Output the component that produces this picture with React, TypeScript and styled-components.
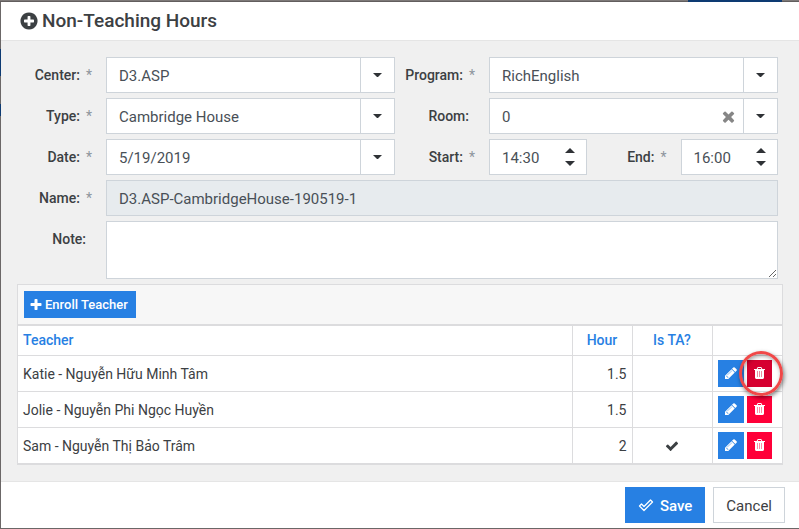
import React, { useId, useState } from "react";
import styled, { createGlobalStyle, css } from "styled-components";

const GlobalStyle = createGlobalStyle`
  *, *::before, *::after { box-sizing: border-box; }
  html, body, #root { height: 100%; }
  body {
    margin: 0;
    background: #6b6767;
    color: #3c4043;
    font-family: Roboto, "Liberation Sans", sans-serif;
    font-size: 14px;
    line-height: 20px;
  }
  button, input, select, textarea { font: inherit; color: inherit; border-radius: 0; margin: 0; }
`;

const Backdrop = styled.div`
  min-height: 100%;
  display: flex;
  padding: 2px 0 1px 1px;
  background:
    linear-gradient(#0d3a72, #0d3a72) calc(100% - 17px) 0 / 94px 2px no-repeat,
    linear-gradient(#0d3a72, #0d3a72) 0 49px / 1px 27px no-repeat,
    linear-gradient(#0d3a72, #0d3a72) 0 104px / 1px 12px no-repeat,
    linear-gradient(#7d7978 1px, #625e5e 1px) 0 0 / 100% 2px no-repeat,
    #6b6767;
`;

const Dialog = styled.section`
  flex: 1;
  min-width: 0;
  display: flex;
  flex-direction: column;
  background: #fff;
`;

const Header = styled.header`
  display: flex;
  align-items: center;
  gap: 3px;
  height: 39px;
  padding: 0 18px;
  border-bottom: 1px solid #e5e5e5;
`;

const Title = styled.h1`
  margin: 0;
  font-size: 19px;
  line-height: 24px;
  font-weight: 500;
`;

const Body = styled.div`
  flex: 1;
  padding: 16px;
  background: #f0f0f0;
`;

const Form = styled.div`
  display: grid;
  grid-template-columns: 89px 1fr 94px 1fr;
  row-gap: 5px;
  padding-right: 5px;
`;

const FieldLabel = styled.label<{ $required?: boolean }>`
  height: 36px;
  display: flex;
  justify-content: flex-end;
  gap: 6px;
  padding: 8px ${(p) => (p.$required ? 14 : 20)}px 0 0;
  font-weight: 500;
  white-space: nowrap;
`;

const Star = styled.span`
  color: #8d959d;
  font-weight: 400;
`;

const Control = styled.div<{ $wide?: boolean }>`
  display: flex;
  min-width: 0;
  border: 1px solid #ced4da;
  background: #fff;
  color: #495057;
  font-size: 15px;
  ${(p) => p.$wide && css`grid-column: span 3;`}
`;

const fieldText = css`
  flex: 1;
  min-width: 0;
  height: 34px;
  padding: 2px 12px 0;
  border: 0;
  background: transparent;
  outline: 0;
`;

const TextInput = styled.input`
  ${fieldText}
  &[readonly] { background: #e7ebee; }
`;

const Picker = styled.select`
  ${fieldText}
  appearance: none;
`;

const NoteArea = styled.textarea`
  display: block;
  width: 100%;
  height: 56px;
  padding: 8px 12px;
  border: 0;
  outline: 0;
  resize: vertical;
`;

const DropButton = styled.button`
  width: 34px;
  display: flex;
  align-items: center;
  justify-content: center;
  padding: 0;
  border: 0;
  border-left: 1px solid #ced4da;
  background: #fff;
`;

const ClearButton = styled.button`
  width: 30px;
  display: flex;
  align-items: center;
  justify-content: center;
  padding: 0;
  border: 0;
  background: none;
  color: #868686;
`;

const Spinner = styled.div`
  width: 32px;
  display: flex;
  flex-direction: column;
  justify-content: center;
  gap: 2px;
`;

const SpinButton = styled.button`
  height: 11px;
  display: flex;
  align-items: center;
  justify-content: center;
  padding: 0;
  border: 0;
  background: none;
`;

const TimeRange = styled.div`
  display: grid;
  grid-template-columns: 1fr 94px 1fr;
`;

const Panel = styled.div`
  margin-top: 5px;
  border: 1px solid #dcdcde;
  border-bottom-width: 2px;
  background: #fff;
`;

const Toolbar = styled.div`
  padding: 6px;
  height: 41px;
  border-bottom: 2px solid #dcdcde;
  background: #f7f7f7;
`;

const EnrollButton = styled.button`
  height: 27px;
  display: flex;
  align-items: center;
  gap: 2px;
  padding: 0 8px 0 5px;
  border: 0;
  background: #2780e3;
  color: #fff;
  font-size: 13px;
  font-weight: 500;
`;

const Table = styled.table`
  width: 100%;
  border-collapse: collapse;
  table-layout: fixed;
`;

const Col = styled.col<{ $width?: number }>`
  ${(p) => p.$width && css`width: ${p.$width}px;`}
`;

const cell = css<{ $align?: "left" | "center" | "right" }>`
  text-align: ${(p) => p.$align ?? "left"};
  padding: 0 5px;
  border: 0 solid #dcdcde;
  &:not(:first-child) { border-left-width: 1px; }
`;

const HeadCell = styled.th`
  ${cell}
  height: 29px;
  color: #2780e3;
  font-weight: 500;
`;

const Cell = styled.td<{ $flush?: boolean }>`
  ${cell}
  height: 36px;
  padding-top: ${(p) => (p.$flush ? 0 : 2)}px;
  border-top-width: 1px;
  > svg { display: block; margin: 0 auto; }
`;

const Actions = styled.div`
  display: flex;
  gap: 3px;
`;

const ActionButton = styled.button<{ $tone: "edit" | "delete" | "active" }>`
  width: ${(p) => (p.$tone === "edit" ? 26 : 25)}px;
  height: 27px;
  display: flex;
  align-items: center;
  justify-content: center;
  padding: 0 0 1px;
  border: 0;
  color: #fff;
  background: ${(p) => ({ edit: "#2780e3", delete: "#ff0039", active: "#d60030" })[p.$tone]};
`;

const Marked = styled.span`
  position: relative;
  display: flex;
`;

const Ring = styled.span`
  position: absolute;
  inset: -9px -11px -9px -8px;
  border: 3px solid #f04848;
  border-radius: 50%;
  box-shadow: 1px 2px 4px rgba(0, 0, 0, 0.5), inset 1px 2px 4px rgba(0, 0, 0, 0.35);
  pointer-events: none;
  z-index: 1;
`;

const Footer = styled.footer`
  display: flex;
  justify-content: flex-end;
  gap: 8px;
  height: 47px;
  padding: 5px 14px;
  border-top: 1px solid #e5e5e5;
`;

const FooterButton = styled.button<{ $primary?: boolean }>`
  height: 36px;
  display: flex;
  align-items: center;
  gap: 6px;
  padding: 2px 12px 0;
  font-size: 15px;
  border: 1px solid #ced4da;
  background: #fff;
  ${(p) => p.$primary && css`
    border-color: #2780e3;
    background: #2780e3;
    color: #fff;
    font-weight: 500;
  `}
`;

type GlyphShape = { x: number; w: number; d: string; shade?: string };

const glyphs = {
  plusCircle: {
    x: 0,
    w: 1792,
    d: "M1344 960v-128q0-26-19-45t-45-19h-256v-256q0-26-19-45t-45-19h-128q-26 0-45 19t-19 45v256h-256q-26 0-45 19t-19 45v128q0 26 19 45t45 19h256v256q0 26 19 45t45 19h128q26 0 45-19t19-45v-256h256q26 0 45-19t19-45zm320-64q0 209-103 385.5t-279.5 279.5-385.5 103-385.5-103-279.5-279.5-103-385.5 103-385.5 279.5-279.5 385.5-103 385.5 103 279.5 279.5 103 385.5z",
  },
  plus: {
    x: 0,
    w: 1792,
    d: "M1600 736v192q0 40-28 68t-68 28h-416v416q0 40-28 68t-68 28h-192q-40 0-68-28t-28-68v-416h-416q-40 0-68-28t-28-68v-192q0-40 28-68t68-28h416v-416q0-40 28-68t68-28h192q40 0 68 28t28 68v416h416q40 0 68 28t28 68z",
  },
  times: {
    x: 0,
    w: 1792,
    d: "M1490 1322q0 40-28 68l-136 136q-28 28-68 28t-68-28l-294-294-294 294q-28 28-68 28t-68-28l-136-136q-28-28-28-68t28-68l294-294-294-294q-28-28-28-68t28-68l136-136q28-28 68-28t68 28l294 294 294-294q28-28 68-28t68 28l136 136q28 28 28 68t-28 68l-294 294 294 294q28 28 28 68z",
  },
  check: {
    x: 0,
    w: 1792,
    d: "M1671 566q0 40-28 68l-724 724-136 136q-28 28-68 28t-68-28l-136-136-362-362q-28-28-28-68t28-68l136-136q28-28 68-28t68 28l294 295 656-657q28-28 68-28t68 28l136 136q28 28 28 68z",
  },
  trash: {
    x: 192,
    w: 1408,
    d: "M704 1376v-704q0-14-9-23t-23-9h-64q-14 0-23 9t-9 23v704q0 14 9 23t23 9h64q14 0 23-9t9-23zm256 0v-704q0-14-9-23t-23-9h-64q-14 0-23 9t-9 23v704q0 14 9 23t23 9h64q14 0 23-9t9-23zm256 0v-704q0-14-9-23t-23-9h-64q-14 0-23 9t-9 23v704q0 14 9 23t23 9h64q14 0 23-9t9-23zm-544-992h448l-48-117q-7-9-17-11h-317q-10 2-17 11zm928 32v64q0 14-9 23t-23 9h-96v948q0 83-47 143.5t-113 60.5h-832q-66 0-113-58.5t-47-141.5v-952h-96q-14 0-23-9t-9-23v-64q0-14 9-23t23-9h309l70-167q15-37 54-63t79-26h320q40 0 79 26t54 63l70 167h309q14 0 23 9t9 23z",
    shade: "M576 640h128v768h-128zM832 640h128v768h-128zM1088 640h128v768h-128z",
  },
  pencil: {
    x: 128,
    w: 1536,
    d: "M491 1536l91-91-235-235-91 91v107h128v128h107zm523-928q0-22-22-22-10 0-17 7l-542 542q-7 7-7 17 0 22 22 22 10 0 17-7l542-542q7-7 7-17zm-54-192l416 416-832 832h-416v-416zm683 96q0 53-37 90l-166 166-416-416 166-165q36-38 90-38 53 0 91 38l235 234q37 39 37 91z",
    shade: "M491 1536l91-91-235-235-91 91v107h128v128z",
  },
} satisfies Record<string, GlyphShape>;

function Glyph({ name, size = 14 }: { name: keyof typeof glyphs; size?: number }) {
  const { x, w, d, shade }: GlyphShape = glyphs[name];
  return (
    <svg width={(size * w) / 1792} height={size} viewBox={`${x} 0 ${w} 1792`} fill="currentColor" aria-hidden="true">
      <path d={d} />
      {shade && <path d={shade} opacity="0.55" />}
    </svg>
  );
}

function Caret({ up }: { up?: boolean }) {
  return (
    <svg width="10" height="5" viewBox="0 0 10 5" fill="#2f3236" aria-hidden="true">
      <path d={up ? "M0 5L5 0L10 5Z" : "M0 0H10L5 5Z"} />
    </svg>
  );
}

function DropCaret() {
  return (
    <svg width="9" height="4" viewBox="0 0 9 4" fill="#2f3236" aria-hidden="true">
      <path d="M0 0H9L5 4H4Z" />
    </svg>
  );
}

function OutlineCheck() {
  return (
    <svg width="16" height="15" viewBox="0 0 16 15" fill="none" stroke="currentColor" strokeWidth="1.3" strokeLinejoin="round" aria-hidden="true">
      <path d="M1.5 7L3.5 5L6 7.5L12.5 1L14.5 3L6 11.5Z" />
    </svg>
  );
}

type FieldProps = { label: string; value: string; required?: boolean };

function LabelFor({ id, label, required }: { id: string; label: string; required?: boolean }) {
  return (
    <FieldLabel htmlFor={id} $required={required}>
      {label}
      {required && <Star>*</Star>}
    </FieldLabel>
  );
}

function SelectField({ label, value, required, clearable }: FieldProps & { clearable?: boolean }) {
  const id = useId();
  return (
    <>
      <LabelFor id={id} label={label} required={required} />
      <Control>
        <Picker id={id} defaultValue={value}>
          <option>{value}</option>
        </Picker>
        {clearable && (
          <ClearButton type="button" aria-label={`Clear ${label}`}>
            <Glyph name="times" size={17} />
          </ClearButton>
        )}
        <DropButton type="button" aria-label={`Open ${label}`}><DropCaret /></DropButton>
      </Control>
    </>
  );
}

function DateField({ label, value, required }: FieldProps) {
  const id = useId();
  return (
    <>
      <LabelFor id={id} label={label} required={required} />
      <Control>
        <TextInput id={id} defaultValue={value} />
        <DropButton type="button" aria-label="Open calendar"><DropCaret /></DropButton>
      </Control>
    </>
  );
}

function shift(time: string, minutes: number) {
  const [h, m] = time.split(":").map(Number);
  const total = (h * 60 + m + minutes + 1440) % 1440;
  return `${String(Math.floor(total / 60)).padStart(2, "0")}:${String(total % 60).padStart(2, "0")}`;
}

function TimeControl({ id, value }: { id: string; value: string }) {
  const [time, setTime] = useState(value);
  return (
    <Control>
      <TextInput id={id} value={time} onChange={(e) => setTime(e.target.value)} />
      <Spinner>
        <SpinButton type="button" aria-label="Later" onClick={() => setTime(shift(time, 30))}><Caret up /></SpinButton>
        <SpinButton type="button" aria-label="Earlier" onClick={() => setTime(shift(time, -30))}><Caret /></SpinButton>
      </Spinner>
    </Control>
  );
}

const teachers = [
  { name: "Katie - Nguyễn Hữu Minh Tâm", hours: "1.5", ta: false, marked: true },
  { name: "Jolie - Nguyễn Phi Ngọc Huyền", hours: "1.5", ta: false, marked: false },
  { name: "Sam - Nguyễn Thị Bảo Trâm", hours: "2", ta: true, marked: false },
];

export default function App() {
  return (
    <>
      <GlobalStyle />
      <Backdrop>
        <Dialog role="dialog" aria-labelledby="dialog-title">
          <Header>
            <Glyph name="plusCircle" size={20} />
            <Title id="dialog-title">Non-Teaching Hours</Title>
          </Header>
          <Body>
            <Form>
              <SelectField label="Center:" value="D3.ASP" required />
              <SelectField label="Program:" value="RichEnglish" required />
              <SelectField label="Type:" value="Cambridge House" required />
              <SelectField label="Room:" value="0" clearable />
              <DateField label="Date:" value="5/19/2019" required />
              <LabelFor id="start" label="Start:" required />
              <TimeRange>
                <TimeControl id="start" value="14:30" />
                <LabelFor id="end" label="End:" required />
                <TimeControl id="end" value="16:00" />
              </TimeRange>
              <LabelFor id="name" label="Name:" required />
              <Control $wide>
                <TextInput id="name" readOnly value="D3.ASP-CambridgeHouse-190519-1" />
              </Control>
              <LabelFor id="note" label="Note:" />
              <Control $wide>
                <NoteArea id="note" />
              </Control>
            </Form>
            <Panel>
              <Toolbar>
                <EnrollButton type="button"><Glyph name="plus" />Enroll Teacher</EnrollButton>
              </Toolbar>
              <Table>
                <colgroup>
                  <Col />
                  <Col $width={60} />
                  <Col $width={80} />
                  <Col $width={70} />
                </colgroup>
                <thead>
                  <tr>
                    <HeadCell>Teacher</HeadCell>
                    <HeadCell $align="center">Hour</HeadCell>
                    <HeadCell $align="center">Is TA?</HeadCell>
                    <HeadCell aria-label="Actions" />
                  </tr>
                </thead>
                <tbody>
                  {teachers.map((t) => (
                    <tr key={t.name}>
                      <Cell>{t.name}</Cell>
                      <Cell $align="right">{t.hours}</Cell>
                      <Cell $align="center">{t.ta && <Glyph name="check" />}</Cell>
                      <Cell $flush>
                        <Actions>
                          <ActionButton type="button" $tone="edit" aria-label={`Edit ${t.name}`}>
                            <Glyph name="pencil" />
                          </ActionButton>
                          <Marked>
                            <ActionButton type="button" $tone={t.marked ? "active" : "delete"} aria-label={`Delete ${t.name}`}>
                              <Glyph name="trash" />
                            </ActionButton>
                            {t.marked && <Ring />}
                          </Marked>
                        </Actions>
                      </Cell>
                    </tr>
                  ))}
                </tbody>
              </Table>
            </Panel>
          </Body>
          <Footer>
            <FooterButton type="button" $primary><OutlineCheck />Save</FooterButton>
            <FooterButton type="button">Cancel</FooterButton>
          </Footer>
        </Dialog>
      </Backdrop>
    </>
  );
}
